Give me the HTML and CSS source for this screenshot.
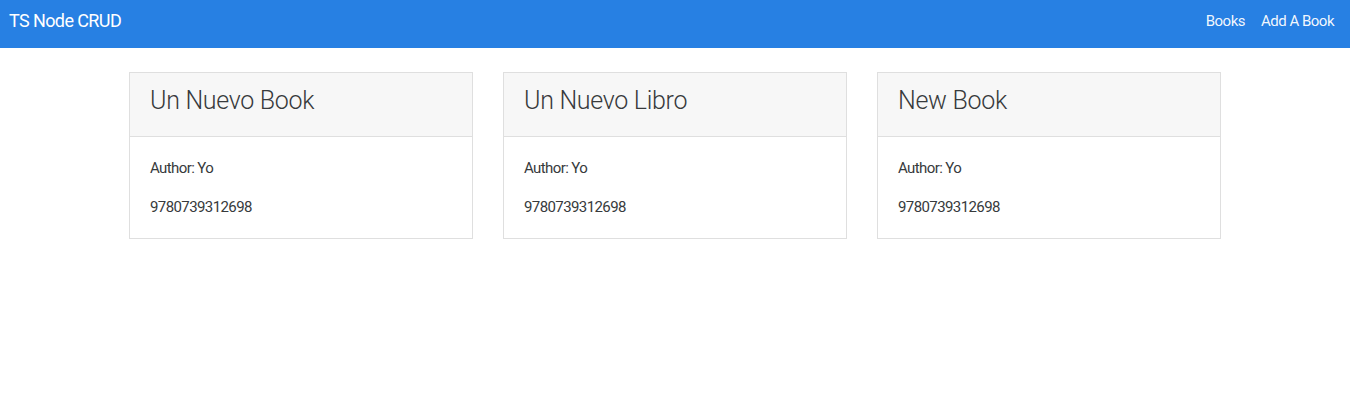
FILE: index.html
```html
<!DOCTYPE html>
<html lang="en">
<head>
<meta charset="utf-8">
<title>TS Node CRUD</title>
<link rel="stylesheet" href="styles.css">
</head>
<body>
<nav class="navbar">
  <a class="brand" href="#">TS Node CRUD</a>
  <ul class="nav-links">
    <li><a href="#">Books</a></li>
    <li><a href="#">Add A Book</a></li>
  </ul>
</nav>
<main class="container">
  <div class="card">
    <div class="card-header"><h3 class="card-title">Un Nuevo Book</h3></div>
    <div class="card-body">
      <p>Author: Yo</p>
      <p>9780739312698</p>
    </div>
  </div>
  <div class="card">
    <div class="card-header"><h3 class="card-title">Un Nuevo Libro</h3></div>
    <div class="card-body">
      <p>Author: Yo</p>
      <p>9780739312698</p>
    </div>
  </div>
  <div class="card">
    <div class="card-header"><h3 class="card-title">New Book</h3></div>
    <div class="card-body">
      <p>Author: Yo</p>
      <p>9780739312698</p>
    </div>
  </div>
</main>
</body>
</html>
```
FILE: styles.css
```css
* { box-sizing: border-box; }
html, body { margin: 0; padding: 0; }
body {
  font-family: Roboto, "Liberation Sans", sans-serif;
  font-size: 15px;
  line-height: 1.5;
  color: #373a3c;
  background: #fff;
}
.navbar {
  height: 48px;
  background: #2780e3;
  display: flex;
  align-items: flex-start;
  justify-content: space-between;
  padding: 8px 8px 0 8px;
}
.brand {
  color: #fff;
  text-decoration: none;
  font-size: 18px;
  letter-spacing: -0.6px;
  line-height: 26px;
  padding-left: 1px;
}
.nav-links {
  list-style: none;
  margin: 0;
  padding: 0;
  display: flex;
}
.nav-links a {
  display: block;
  color: rgba(255,255,255,0.95);
  text-decoration: none;
  font-size: 15px;
  letter-spacing: -0.5px;
  line-height: 26px;
  padding: 0 8px;
}
.container {
  display: grid;
  grid-template-columns: repeat(3, 344px);
  gap: 30px;
  justify-content: center;
  padding-top: 24px;
}
.card {
  border: 1px solid #dfdfdf;
  background: #fff;
  align-self: start;
}
.card-header {
  background: #f7f7f7;
  border-bottom: 1px solid #dfdfdf;
  padding: 12px 20px;
  height: 64px;
}
.card-title {
  margin: 0;
  font-size: 25px;
  font-weight: 300;
  letter-spacing: -0.3px;
  line-height: 32px;
}
.card-body {
  padding: 20px 20px 20px;
}
.card-body p {
  margin: 0 0 16px;
  font-size: 15px;
  letter-spacing: -0.6px;
  line-height: 22.5px;
}
.card-body p:last-child { margin-bottom: 0; }
```
